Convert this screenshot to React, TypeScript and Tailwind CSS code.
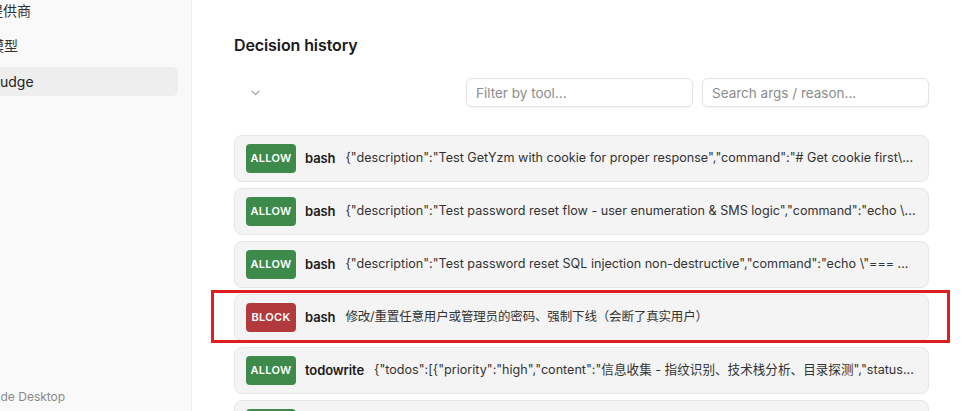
import React from "react";

type Row = { decision: "ALLOW" | "BLOCK"; tool: string; args: string; highlight?: boolean; cjk?: boolean };

const rows: Row[] = [
  {
    decision: "ALLOW",
    tool: "bash",
    args: '{"description":"Test GetYzm with cookie for proper response","command":"# Get cookie first\\...',
  },
  {
    decision: "ALLOW",
    tool: "bash",
    args: '{"description":"Test password reset flow - user enumeration & SMS logic","command":"echo \\...',
  },
  {
    decision: "ALLOW",
    tool: "bash",
    args: '{"description":"Test password reset SQL injection non-destructive","command":"echo \\"=== ...',
  },
  {
    decision: "BLOCK",
    tool: "bash",
    args: "修改/重置任意用户或管理员的密码、强制下线（会断了真实用户）",
    highlight: true,
    cjk: true,
  },
  {
    decision: "ALLOW",
    tool: "todowrite",
    args: '{"todos":[{"priority":"high","content":"信息收集 - 指纹识别、技术栈分析、目录探测","status...',
  },
  {
    decision: "ALLOW",
    tool: "bash",
    args: '{"description":"Test login endpoint","command":"curl ...',
  },
];

const font = {
  fontFamily: '"Inter", "Noto Sans CJK SC", "Liberation Sans", sans-serif',
};

function Card({ row }: { row: Row }) {
  const isBlock = row.decision === "BLOCK";
  return (
    <div className="relative">
      <div className="flex h-[47px] items-center rounded-[8px] border border-[#e6e6e6] bg-[#f4f4f4] pl-[11px] pr-[10px]">
        <div
          className={
            "flex h-[29px] w-[50px] shrink-0 items-center justify-center rounded-[4px] text-[11px] font-semibold tracking-[0.3px] text-white " +
            (isBlock ? "bg-[#b23a3c]" : "bg-[#3d8a4a]")
          }
        >
          {row.decision}
        </div>
        <div className="ml-[9px] shrink-0 text-[13px] font-semibold tracking-[-0.1px] text-[#1a1a1a]">{row.tool}</div>
        <div
          className={
            "ml-[10px] min-w-0 truncate whitespace-pre text-[#333333] " +
            (row.cjk ? "text-[12.5px] tracking-[-0.15px]" : "text-[12.6px]")
          }
        >
          {row.args}
        </div>
      </div>
      {row.highlight && (
        <div className="pointer-events-none absolute -bottom-[2px] -left-[23px] -right-[21px] -top-[4px] border-[3px] border-[#dc1f1f]" />
      )}
    </div>
  );
}

export default function App() {
  return (
    <div className="flex h-[411px] w-[966px] overflow-hidden bg-white" style={font}>
      {/* Sidebar */}
      <aside className="flex h-full w-[192px] shrink-0 flex-col overflow-hidden border-r border-[#ececec] bg-[#f9f9f9]">
        <div className="mt-[-4px] flex flex-col gap-[6px] pr-[13px]">
          <div className="flex h-[29px] items-center text-[14px] text-[#333]">
            <span className="ml-[-11px] whitespace-nowrap">提供商</span>
          </div>
          <div className="flex h-[29px] items-center text-[14px] text-[#333]">
            <span className="ml-[-10px] whitespace-nowrap">模型</span>
          </div>
          <div className="mt-[1px] flex h-[29px] items-center rounded-r-[6px] bg-[#eeeeee] text-[14px] text-[#222]">
            <span className="ml-[-8px] whitespace-nowrap">Judge</span>
          </div>
        </div>
        <div className="mt-auto mb-[5px] whitespace-nowrap text-[12px] text-[#8a8a8a]">
          <span className="ml-[-25px]">Claude Desktop</span>
        </div>
      </aside>

      {/* Main */}
      <main className="flex min-w-0 flex-1 flex-col pl-[42px] pr-[37px]">
        <h1 className="mt-[35px] text-[16px] font-semibold leading-[21px] tracking-[-0.1px] text-[#1a1a1a]">
          Decision history
        </h1>

        <div className="mt-[22px] flex h-[29px] items-center">
          <div className="ml-[17px] text-[#9a9a9a]">
            <svg width="9" height="6" viewBox="0 0 9 6" fill="none">
              <path d="M1 1.2l3.5 3.5L8 1.2" stroke="currentColor" strokeWidth="1.1" strokeLinecap="round" strokeLinejoin="round" />
            </svg>
          </div>
          <div className="ml-auto flex gap-[9px]">
            <input
              className="h-[29px] w-[227px] rounded-[6px] border border-[#e3e3e3] bg-white px-[9px] text-[13.5px] text-[#333] shadow-[0_1px_2px_rgba(0,0,0,0.05)] outline-none placeholder:text-[#8c8c8c]"
              placeholder="Filter by tool..."
            />
            <input
              className="h-[29px] w-[227px] rounded-[6px] border border-[#e3e3e3] bg-white px-[9px] text-[13.5px] text-[#333] shadow-[0_1px_2px_rgba(0,0,0,0.05)] outline-none placeholder:text-[#8c8c8c]"
              placeholder="Search args / reason..."
            />
          </div>
        </div>

        <div className="mt-[28px] flex flex-col gap-[6px]">
          {rows.map((r, i) => (
            <Card key={i} row={r} />
          ))}
        </div>
      </main>
    </div>
  );
}
